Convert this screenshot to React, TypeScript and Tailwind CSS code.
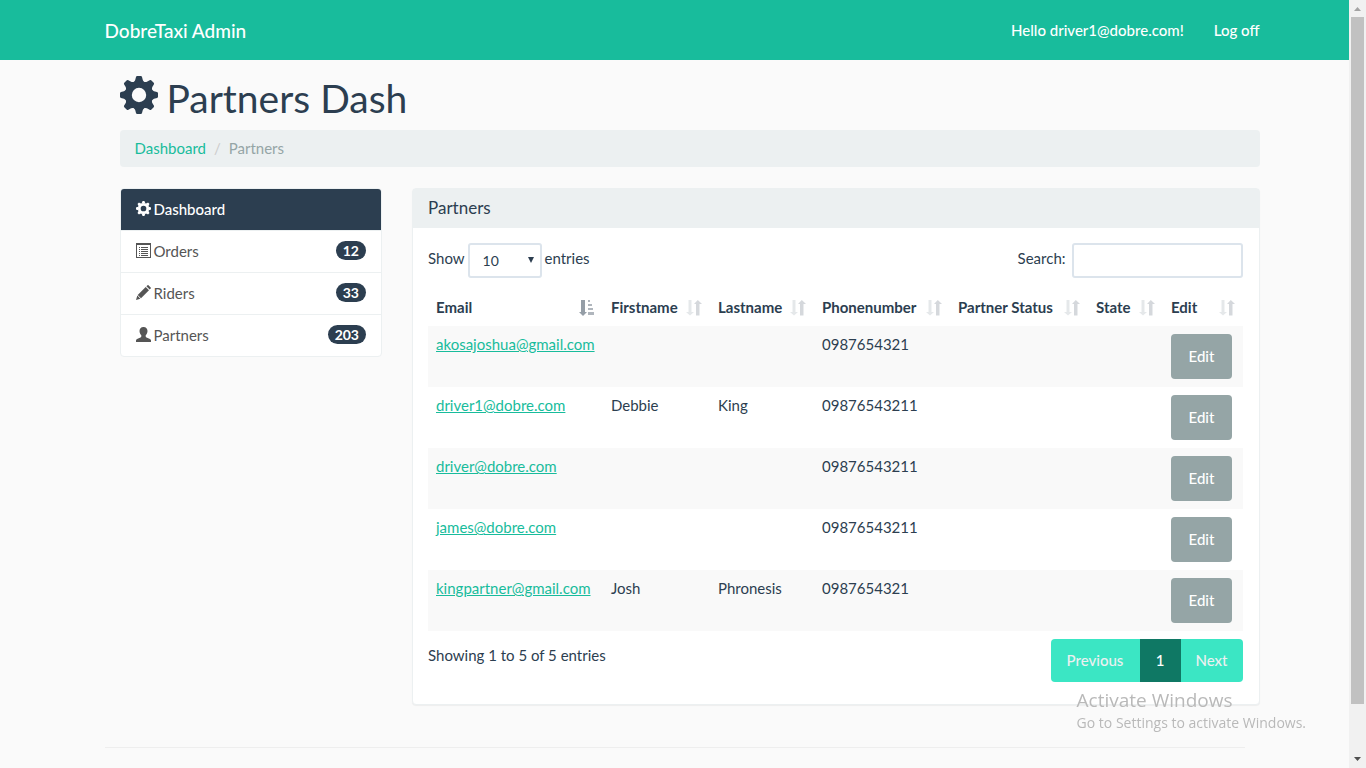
import type { ReactNode } from "react";

const teeth = [0, 45, 90, 135, 180, 225, 270, 315];

function CogIcon({ className }: { className: string }) {
  return (
    <svg viewBox="0 0 38 38" className={className} fill="currentColor" aria-hidden="true">
      {teeth.map((a) => (
        <path key={a} d="M16 1Q16.200 0 17.200 0H20.800Q21.800 0 22 1L22.800 4Q23 5 25 6.500H13Q15 5 15.200 4Z" transform={`rotate(${a} 19 19)`} />
      ))}
      <path fillRule="evenodd" d="M19 5a14 14 0 1 0 0 28a14 14 0 1 0 0-28ZM19 11.800a7.200 7.200 0 1 1 0 14.400a7.200 7.200 0 1 1 0-14.400Z" />
    </svg>
  );
}

function ListIcon() {
  return (
    <svg viewBox="0 0 15 15" className="size-[15px]" fill="currentColor" aria-hidden="true">
      <path fillRule="evenodd" d="M0 0H15V15H0ZM1 2V14H14V2Z" />
      <path d="M3 4h1v1H3zM5 4h7v1H5zM3 6h1v1H3zM5 6h7v1H5zM3 8h1v1H3zM5 8h7v1H5zM3 10h1v1H3zM5 10h7v1H5zM3 12h1v1H3zM5 12h7v1H5z" />
    </svg>
  );
}

function PencilIcon() {
  return (
    <svg viewBox="0 0 15 15" className="size-[15px]" fill="currentColor" aria-hidden="true">
      <path d="M0 15L1.300 10.600L4.400 13.700ZM1.700 10L9.700 2L13 5.300L5 13.300ZM10.400 1.300L11.500.3Q12 -.1 12.500.3L14.700 2.500Q15.100 3 14.700 3.500L13.700 4.600Z" />
    </svg>
  );
}

function UserIcon() {
  return (
    <svg viewBox="0 0 15 15" className="size-[15px]" fill="currentColor" aria-hidden="true">
      <path d="M7.500 0C10.200 0 11.500 1.700 11.500 4C11.500 6 10.600 7.300 9.700 8.200V9.500Q9.800 10.100 10.500 10.400L14 11.900Q15 12.400 15 13.600V15H0V13.600Q0 12.400 1 11.900L4.500 10.400Q5.200 10.100 5.300 9.500V8.200C4.400 7.300 3.500 6 3.500 4C3.500 1.700 4.800 0 7.500 0Z" />
    </svg>
  );
}

function SortIcon({ active }: { active?: boolean }) {
  return active ? (
    <svg viewBox="0 0 16 16" className="size-[16px] shrink-0 text-[#959ea7]" fill="currentColor" aria-hidden="true">
      <path d="M2 0H6V12H8L4 16L0 12H2Z" />
      <path opacity=".75" d="M9 0h2v2H9zM9 4h4v2H9zM9 8h5v2H9zM9 12h6v3H9z" />
    </svg>
  ) : (
    <svg viewBox="0 0 16 16" className="size-[16px] shrink-0 text-[#2c3e50]" fill="currentColor" aria-hidden="true">
      <path opacity=".12" d="M2.500 0H5.500V12H8L4 15.500L0 12H2.500Z" />
      <path opacity=".2" d="M10 15.500H13.500V4H16L11.800 0L8 4H10Z" />
    </svg>
  );
}

const menu: { label: string; icon: ReactNode; count: number }[] = [
  { label: "Orders", icon: <ListIcon />, count: 12 },
  { label: "Riders", icon: <PencilIcon />, count: 33 },
  { label: "Partners", icon: <UserIcon />, count: 203 },
];

const columns = [
  { label: "Email", width: "w-[175px]" },
  { label: "Firstname", width: "w-[107px]" },
  { label: "Lastname", width: "w-[104px]" },
  { label: "Phonenumber", width: "w-[136px]" },
  { label: "Partner Status", width: "w-[138px]" },
  { label: "State", width: "w-[75px]" },
  { label: "Edit", width: "w-[80px]" },
];

const partners = [
  { email: "akosajoshua@gmail.com", first: "", last: "", phone: "0987654321" },
  { email: "driver1@dobre.com", first: "Debbie", last: "King", phone: "09876543211" },
  { email: "driver@dobre.com", first: "", last: "", phone: "09876543211" },
  { email: "james@dobre.com", first: "", last: "", phone: "09876543211" },
  { email: "kingpartner@gmail.com", first: "Josh", last: "Phronesis", phone: "0987654321" },
];

function Navbar() {
  return (
    <nav className="bg-[#18bc9c] text-white">
      <div className="mx-auto flex h-[60px] max-w-[1170px] items-center justify-between pl-[15px]">
        <a href="#" className="text-[19px] leading-[21px] font-medium">DobreTaxi Admin</a>
        <div className="flex gap-[30px] font-medium">
          <a href="#">Hello driver1@dobre.com!</a>
          <a href="#">Log off</a>
        </div>
      </div>
    </nav>
  );
}

function Sidebar() {
  return (
    <ul className="col-span-3 self-start overflow-hidden rounded-[4px] border border-[#ecf0f1] bg-white">
      <li>
        <a href="#" className="flex h-[41px] items-center gap-[3px] bg-[#2c3e50] px-[15px] font-medium text-white">
          <span className="pb-[2px]"><CogIcon className="size-[15px]" /></span>
          Dashboard
        </a>
      </li>
      {menu.map((m) => (
        <li key={m.label} className="border-t border-[#ecf0f1]">
          <a href="#" className="flex h-[41px] items-center gap-[3px] px-[15px] text-[#555]">
            <span className="pb-[2px]">{m.icon}</span>
            {m.label}
            <span className="mb-[2px] ml-auto rounded-[10px] bg-[#2c3e50] px-[7px] text-[14px] leading-[19px] font-bold text-white">{m.count}</span>
          </a>
        </li>
      ))}
    </ul>
  );
}

function PartnersTable() {
  return (
    <table className="mt-[11px] w-full table-fixed border-collapse text-left">
      <thead>
        <tr>
          {columns.map((c, i) => (
            <th key={c.label} className={`${c.width} p-2 font-bold whitespace-nowrap`}>
              <div className="flex items-center justify-between">
                {c.label}
                <SortIcon active={i === 0} />
              </div>
            </th>
          ))}
        </tr>
      </thead>
      <tbody>
        {partners.map((p) => (
          <tr key={p.email} className="align-top odd:bg-[#f9f9f9]">
            <td className="p-2"><a href="#" className="text-[#18bc9c] underline">{p.email}</a></td>
            <td className="p-2">{p.first}</td>
            <td className="p-2">{p.last}</td>
            <td className="p-2">{p.phone}</td>
            <td className="p-2" />
            <td className="p-2" />
            <td className="p-2">
              <button className="block h-[45px] w-[61px] rounded-[4px] bg-[#95a5a6] font-medium text-white">Edit</button>
            </td>
          </tr>
        ))}
      </tbody>
    </table>
  );
}

function PartnersPanel() {
  return (
    <section className="col-span-9 rounded-[4px] border border-[#ecf0f1] bg-white shadow-[0_1px_1px_rgba(0,0,0,0.05)]">
      <h2 className="bg-[#ecf0f1] px-[15px] pt-[9px] pb-[11px] text-[17px] leading-[19px]">Partners</h2>
      <div className="pt-[15px] pr-[16px] pb-[22px] pl-[15px]">
        <div className="flex justify-between">
          <label className="flex items-start gap-[3px] leading-[31px]">
            Show
            <span className="relative">
              <select className="block h-[35px] w-[74px] appearance-none rounded-[3px] border-2 border-[#dce4ec] bg-white pl-[13px] text-[14px]">
                <option>10</option>
              </select>
              <svg viewBox="0 0 6 6" className="pointer-events-none absolute top-[14px] right-[8px] size-[6px]" fill="currentColor" aria-hidden="true">
                <path d="M0 0H6L3 6Z" />
              </svg>
            </span>
            entries
          </label>
          <label className="flex items-start gap-[6px] leading-[31px]">
            Search:
            <input type="search" className="h-[35px] w-[171px] rounded-[3px] border-2 border-[#dce4ec] bg-white px-2" />
          </label>
        </div>
        <PartnersTable />
        <div className="flex items-start justify-between pt-2">
          <p className="pt-[6px]">Showing 1 to 5 of 5 entries</p>
          <div className="flex overflow-hidden rounded-[4px] leading-[43px] font-medium text-[#ecf0f1]">
            <button className="w-[89px] bg-[#3be6c4]">Previous</button>
            <button className="w-[41px] bg-[#0f7864] text-white">1</button>
            <button className="w-[62px] bg-[#3be6c4]">Next</button>
          </div>
        </div>
      </div>
    </section>
  );
}

function Scrollbar() {
  return (
    <div className="flex w-[17px] shrink-0 flex-col items-center justify-between bg-[#f1f1f1]" aria-hidden="true">
      <svg viewBox="0 0 17 17" className="size-[17px]"><path d="M5 11H12L8.500 7Z" fill="#a3a3a3" /></svg>
      <div className="w-[13px] flex-1 bg-[#c1c1c1]" />
      <div className="h-[47px]" />
      <svg viewBox="0 0 17 17" className="size-[17px]"><path d="M5 6H12L8.500 10Z" fill="#505050" /></svg>
    </div>
  );
}

export default function App() {
  return (
    <div className="flex h-screen overflow-hidden bg-[#fafafa] font-['Lato',sans-serif] text-[15px] leading-[21px] text-[#2c3e50]">
      <div className="min-w-0 flex-1">
        <Navbar />
        <div className="mx-auto max-w-[1170px] pl-[15px]">
          <main className="pl-[15px]">
            <h1 className="flex items-start gap-[9px] pt-[16px] text-[39px] leading-[44px]">
              <CogIcon className="size-[38px]" />
              Partners Dash
            </h1>
            <ol className="mt-[10px] mb-[21px] flex rounded-[4px] bg-[#ecf0f1] px-[15px] py-2">
              <li><a href="#" className="text-[#18bc9c]">Dashboard</a></li>
              <li className="px-[8px] text-[#ccc]">/</li>
              <li className="text-[#95a5a6]">Partners</li>
            </ol>
            <div className="grid grid-cols-12 gap-[30px]">
              <Sidebar />
              <PartnersPanel />
            </div>
          </main>
          <hr className="mt-[42px] mr-[15px] border-[#eee]" />
        </div>
      </div>
      <Scrollbar />
      <div className="pointer-events-none fixed right-[60px] bottom-[35px] font-['Open_Sans',sans-serif] text-[#b9b9b9]">
        <p className="text-[19px] leading-[26px]">Activate Windows</p>
        <p className="text-[14px] leading-[20px]">Go to Settings to activate Windows.</p>
      </div>
    </div>
  );
}
